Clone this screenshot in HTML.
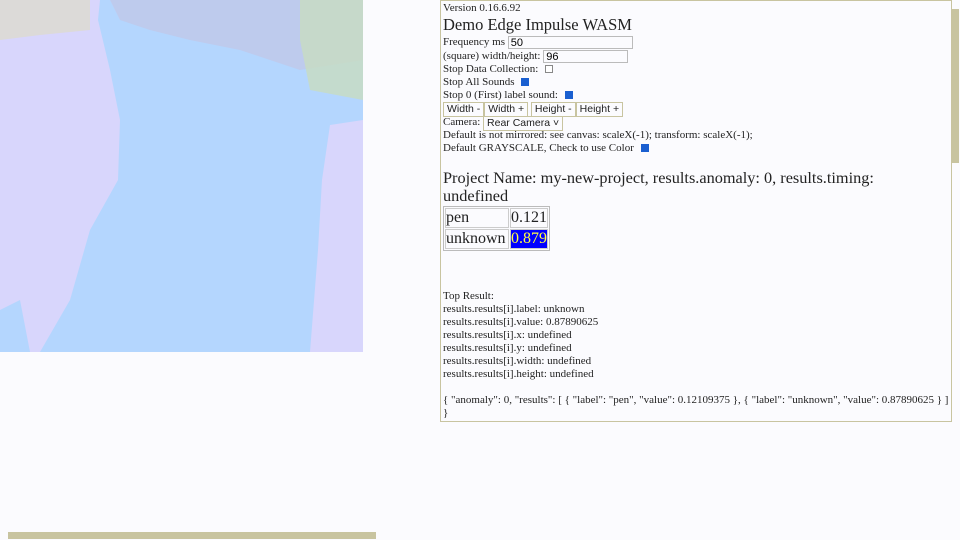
<!DOCTYPE html>
<html><head><style>
html,body{margin:0;padding:0;background:#fbfbfe;width:960px;height:540px;overflow:hidden;font-family:"Liberation Serif",serif;color:#222}
#cam{position:absolute;left:0;top:0;width:363px;height:352px;background:#d8d6fc;overflow:hidden}
#box{position:absolute;left:440px;top:0;border:1.5px solid #c8c4a0;font-size:11px;line-height:13px;padding-left:2px;box-sizing:border-box;width:512px;height:422px;overflow:hidden}
.l{white-space:nowrap;height:13px}
input.t{font:11px "Liberation Sans",sans-serif;height:11px;border:1px solid #bbb;padding:0 2px;vertical-align:top;background:#fbfbfe;margin:0}
.cb{display:inline-block;width:6px;height:6px;border:1px solid #888;vertical-align:middle;margin-left:4px;background:#fff}
.cb.on{background:#1a5fd0;border-color:#1a5fd0}
.btn{display:inline-block;font:10.5px "Liberation Sans",sans-serif;border:1px solid #c8c4a0;padding:0 3px;height:13px;line-height:13px;background:#fbfbfe;vertical-align:top}
table{border:1px solid #bbb;border-collapse:separate;border-spacing:1px;font-size:16px;margin-top:1px}
td{border:1px solid #ccc;padding:0;line-height:18px}
</style></head><body>
<div id="cam">
<svg width="363" height="352" style="position:absolute;left:0;top:0">
<path d="M100 0 L363 0 L363 120 L330 125 L322 180 L318 250 L310 352 L40 352 L70 300 L90 230 L118 180 L120 120 L110 70 L98 20Z" fill="#b4d6fe"/>
<path d="M0 0 L90 0 L90 30 L40 35 L0 40Z" fill="#e0dcc0" opacity=".6"/>
<path d="M110 0 L363 0 L363 60 L300 70 L240 50 L190 40 L150 30 L120 20Z" fill="#c0c8e8" opacity=".8"/>
<path d="M300 0 L363 0 L363 100 L310 90 L300 40Z" fill="#c8dcc0" opacity=".8"/>
<path d="M0 310 L20 300 L30 352 L0 352Z" fill="#b4d6fe"/>
</svg></div>
<div id="box">
<div class="l" style="margin-top:1px">Version 0.16.6.92</div>
<div class="l" style="font-size:16.5px;line-height:18px;height:18px;margin-top:1px">Demo Edge Impulse WASM</div>
<div class="l" style="margin-top:2px">Frequency ms <input class="t" style="width:119px" value="50"></div>
<div class="l" style="margin-top:1px">(square) width/height: <input class="t" style="width:79px" value="96"></div>
<div class="l">Stop Data Collection: <span class="cb"></span></div>
<div class="l">Stop All Sounds <span class="cb on"></span></div>
<div class="l">Stop 0 (First) label sound: <span class="cb on"></span></div>
<div class="l" style="height:14px"><span class="btn">Width -</span><span class="btn">Width +</span> <span class="btn">Height -</span><span class="btn">Height +</span></div>
<div class="l">Camera: <span class="btn">Rear Camera ˅</span></div>
<div class="l">Default is not mirrored: see canvas: scaleX(-1); transform: scaleX(-1);</div>
<div class="l">Default GRAYSCALE, Check to use Color <span class="cb on"></span></div>
<div style="font-size:16.3px;line-height:18px;margin-top:14px;width:445px">Project Name: my-new-project, results.anomaly: 0, results.timing: undefined</div>
<table><tr><td style="width:62px">pen</td><td>0.121</td></tr><tr><td>unknown</td><td style="background:#0000ff;color:#ffff40">0.879</td></tr></table>
<div style="margin-top:39px">Top Result:<br>results.results[i].label: unknown<br>results.results[i].value: 0.87890625<br>results.results[i].x: undefined<br>results.results[i].y: undefined<br>results.results[i].width: undefined<br>results.results[i].height: undefined</div>
<div style="margin-top:13px;white-space:nowrap">{ "anomaly": 0, "results": [ { "label": "pen", "value": 0.12109375 }, { "label": "unknown", "value": 0.87890625 } ]<br>}</div>
</div>
<div style="position:absolute;left:952px;top:9px;width:7px;height:154px;background:#c8c4a0"></div>
<div style="position:absolute;left:8px;top:532px;width:368px;height:7px;background:#c8c4a0"></div>
</body></html>
